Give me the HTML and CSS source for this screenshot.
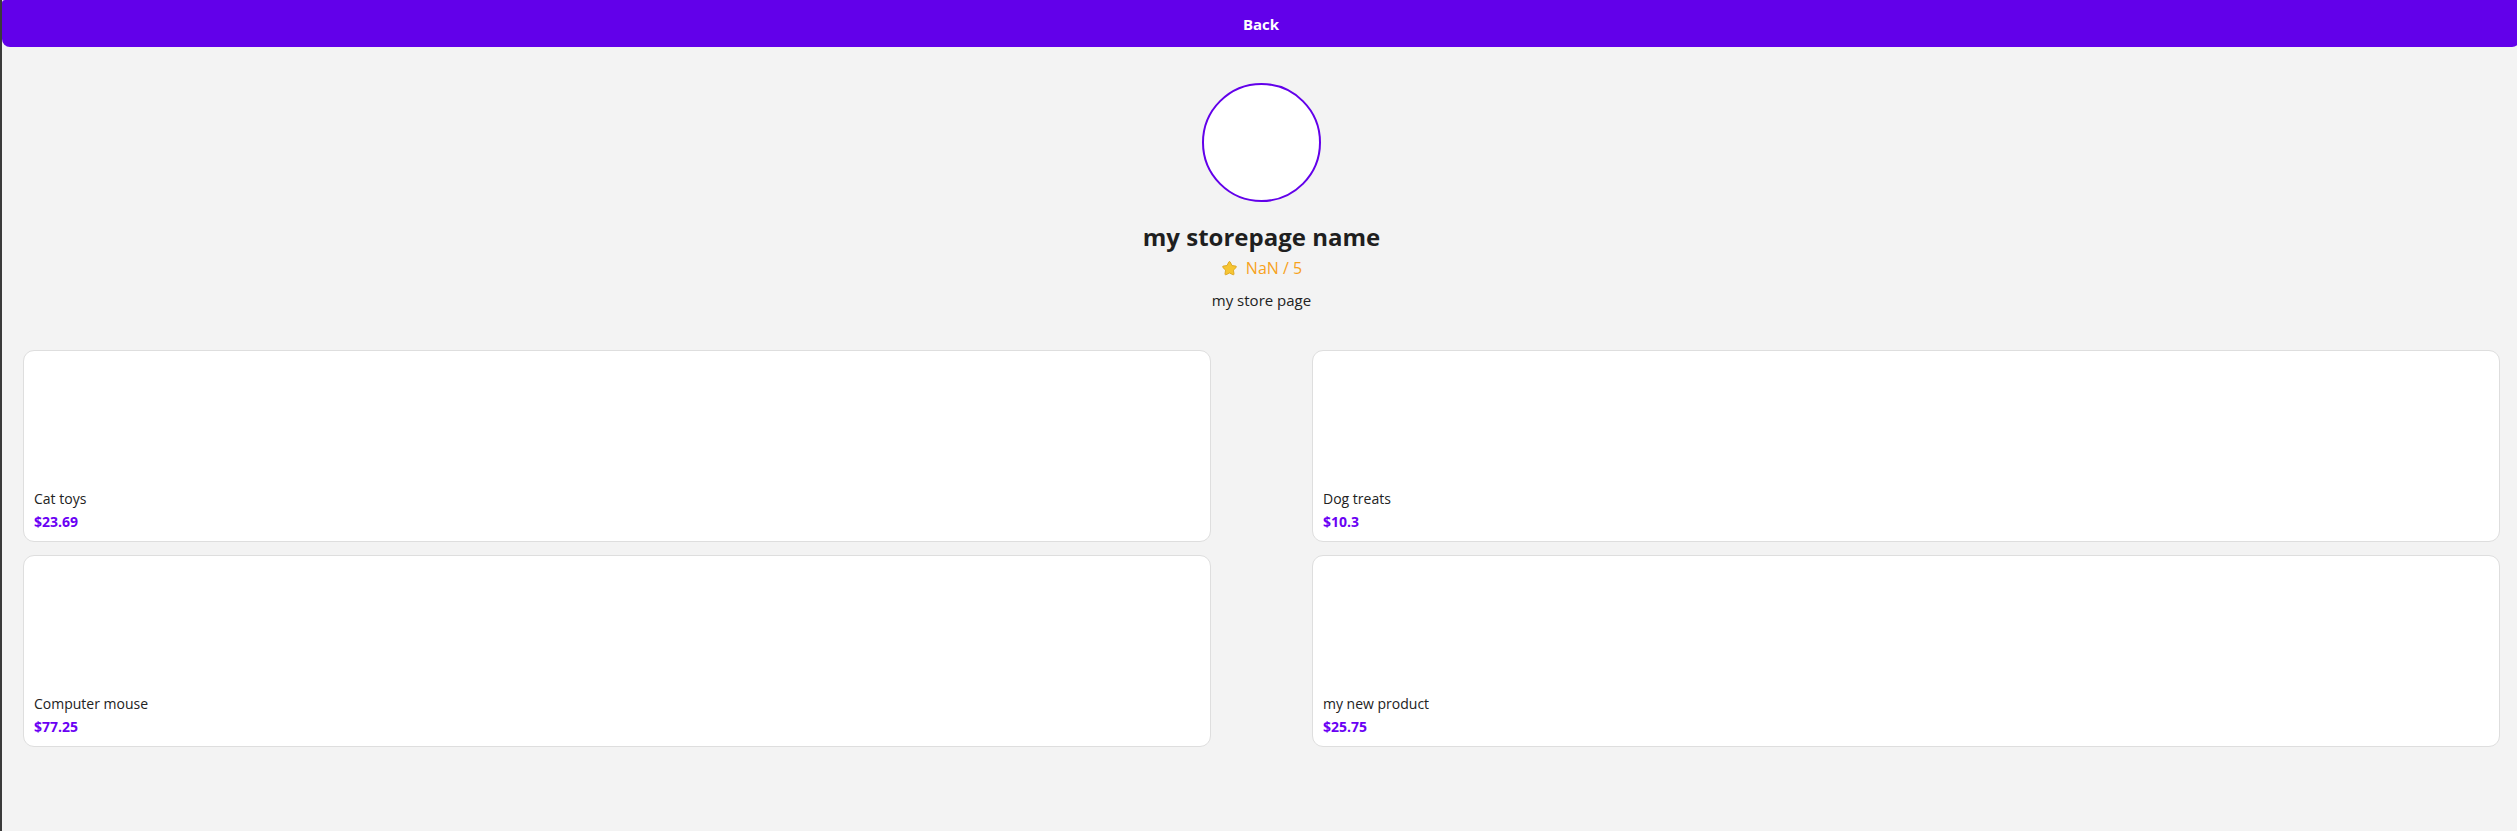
FILE: index.html
```html
<!DOCTYPE html>
<html lang="en">
<head>
<meta charset="utf-8">
<title>Store page</title>
<link rel="stylesheet" href="styles.css">
</head>
<body>
<div class="page">
  <button class="back-btn">Back</button>
  <main class="content">
    <section class="store-header">
      <div class="avatar"></div>
      <h1 class="store-name">my storepage name</h1>
      <div class="rating">
        <svg class="star" viewBox="0 0 24 24" width="17" height="17" aria-hidden="true">
          <path d="M12 2.2c.5 0 .9.3 1.1.7l2.4 4.9 5.3.8c.9.1 1.3 1.3.6 1.9l-3.9 3.8.9 5.3c.2.9-.8 1.6-1.6 1.2L12 18.3l-4.8 2.5c-.8.4-1.8-.3-1.6-1.2l.9-5.3-3.9-3.8c-.7-.6-.3-1.8.6-1.9l5.3-.8 2.4-4.9c.2-.4.6-.7 1.1-.7z" fill="#f6c532" stroke="#d9a01a" stroke-width="1.2" stroke-linejoin="round"/>
        </svg>
        <span class="rating-text">NaN / 5</span>
      </div>
      <p class="store-desc">my store page</p>
    </section>
    <section class="products">
      <article class="card">
        <div class="card-img"></div>
        <div class="card-name">Cat toys</div>
        <div class="card-price">$23.69</div>
      </article>
      <article class="card">
        <div class="card-img"></div>
        <div class="card-name">Dog treats</div>
        <div class="card-price">$10.3</div>
      </article>
      <article class="card">
        <div class="card-img"></div>
        <div class="card-name">Computer mouse</div>
        <div class="card-price">$77.25</div>
      </article>
      <article class="card">
        <div class="card-img"></div>
        <div class="card-name">my new product</div>
        <div class="card-price">$25.75</div>
      </article>
    </section>
  </main>
</div>
</body>
</html>
```

FILE: styles.css
```css
html, body {
  margin: 0;
  padding: 0;
  overflow: hidden;
  background: #f3f3f3;
}

body {
  font-family: "Open Sans", "Noto Sans", "Liberation Sans", sans-serif;
  color: #212121;
}

.page {
  min-height: 100vh;
  border-left: 2px solid #3a3a3a;
  box-sizing: border-box;
}

.back-btn {
  display: block;
  width: calc(100% + 3px);
  height: 47px;
  margin: 0;
  border: none;
  border-radius: 0 0 8px 8px;
  border-top-left-radius: 3px;
  background: #6200ea;
  color: #ffffff;
  font-family: inherit;
  font-size: 15px;
  font-weight: 700;
  cursor: pointer;
  padding: 0;
}

.content {
  padding: 36px 17px 0 21px;
}

.store-header {
  display: flex;
  flex-direction: column;
  align-items: center;
}

.avatar {
  width: 115px;
  height: 115px;
  border-radius: 50%;
  border: 2px solid #6200ea;
  background: #ffffff;
}

.store-name {
  margin: 19px 0 0;
  font-size: 24px;
  line-height: 32px;
  font-weight: 700;
  color: #1f1f1f;
}

.rating {
  display: flex;
  align-items: center;
  gap: 8px;
  margin-top: 3px;
  height: 24px;
}

.star {
  display: block;
}

.rating-text {
  color: #f7a21b;
  font-size: 16px;
  line-height: 24px;
}

.store-desc {
  margin: 8px 0 0;
  font-size: 15px;
  line-height: 24px;
  color: #222222;
}

.products {
  display: grid;
  grid-template-columns: 1fr 1fr;
  column-gap: 101px;
  row-gap: 13px;
  margin-top: 38px;
}

.card {
  background: #ffffff;
  border: 1px solid #dedede;
  border-radius: 11px;
  padding: 0 10px 9px;
  height: 192px;
  box-sizing: border-box;
  display: flex;
  flex-direction: column;
}

.card-img {
  flex: 1;
}

.card-name {
  font-size: 14px;
  line-height: 20px;
  color: #222222;
}

.card-price {
  margin-top: 3px;
  font-size: 14px;
  line-height: 20px;
  font-weight: 700;
  color: #6a00f4;
}
```
